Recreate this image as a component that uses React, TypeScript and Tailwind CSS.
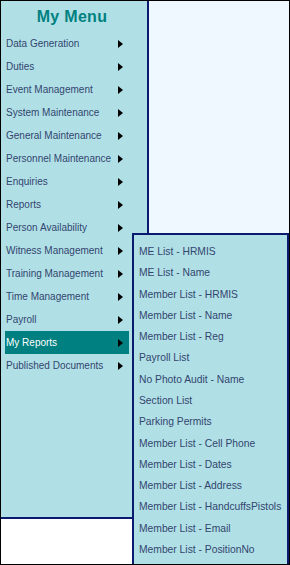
import React from "react";

const menuItems = [
  "Data Generation",
  "Duties",
  "Event Management",
  "System Maintenance",
  "General Maintenance",
  "Personnel Maintenance",
  "Enquiries",
  "Reports",
  "Person Availability",
  "Witness Management",
  "Training Management",
  "Time Management",
  "Payroll",
  "My Reports",
  "Published Documents",
];

const reportItems = [
  "ME List - HRMIS",
  "ME List - Name",
  "Member List - HRMIS",
  "Member List - Name",
  "Member List - Reg",
  "Payroll List",
  "No Photo Audit - Name",
  "Section List",
  "Parking Permits",
  "Member List - Cell Phone",
  "Member List - Dates",
  "Member List - Address",
  "Member List - HandcuffsPistols",
  "Member List - Email",
  "Member List - PositionNo",
];

const Arrow: React.FC = () => (
  <svg width="5" height="8" viewBox="0 0 5 8" className="shrink-0">
    <path d="M0 0 L5 4 L0 8 Z" fill="#000" />
  </svg>
);

const App: React.FC = () => {
  const active = "My Reports";

  return (
    <div
      className="relative w-[290px] h-[565px] border border-black bg-white overflow-hidden flex"
      style={{ fontFamily: '"Liberation Sans", Arial, sans-serif' }}
    >
      <div className="w-[148px] flex flex-col">
        <nav className="h-[518px] bg-[#b0e0e6] border-r-2 border-b-2 border-[#0a1a6e]">
          <h2 className="h-[31px] flex items-center justify-center text-[16px] font-bold text-[#008080] pr-1 tracking-[0.3px]">
            My Menu
          </h2>
          <ul>
            {menuItems.map((item) => (
              <li
                key={item}
                className={`ml-[4px] mr-[18px] h-[23px] flex items-center justify-between pl-[1px] pr-[6px] text-[10px] ${
                  item === active
                    ? "bg-[#008080] text-white"
                    : "text-[#33456e]"
                }`}
              >
                <span className="whitespace-nowrap">{item}</span>
                <Arrow />
              </li>
            ))}
          </ul>
        </nav>
      </div>
      <div className="flex-1 bg-[#f0f8ff]" />

      <ul className="absolute left-[131px] top-[232px] w-[157px] h-[340px] bg-[#b0e0e6] border-2 border-[#0a1a6e] pt-[6px] px-[5px]">
        {reportItems.map((item) => (
          <li
            key={item}
            className="h-[21.3px] flex items-center text-[10.3px] text-[#33456e] whitespace-nowrap"
          >
            {item}
          </li>
        ))}
      </ul>
    </div>
  );
};

export default App;
